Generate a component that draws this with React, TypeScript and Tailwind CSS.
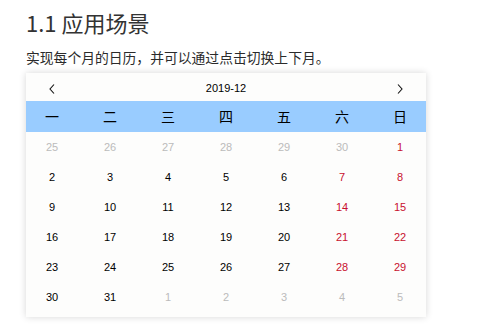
import { useState } from 'react'

const WEEK = ['一', '二', '三', '四', '五', '六', '日']

type Cell = { day: number; kind: 'prev' | 'cur' | 'next' }

function buildMonth(year: number, month: number): Cell[] {
  // month is 1-based, weeks start on Monday
  const first = new Date(year, month - 1, 1)
  const lead = (first.getDay() + 6) % 7
  const days = new Date(year, month, 0).getDate()
  const prevDays = new Date(year, month - 1, 0).getDate()
  const cells: Cell[] = []
  for (let i = lead; i > 0; i--) cells.push({ day: prevDays - i + 1, kind: 'prev' })
  for (let d = 1; d <= days; d++) cells.push({ day: d, kind: 'cur' })
  let n = 1
  while (cells.length < 42) cells.push({ day: n++, kind: 'next' })
  return cells
}

function Chevron({ dir }: { dir: 'left' | 'right' }) {
  return (
    <svg width="6" height="10" viewBox="0 0 6 10" fill="none" stroke="#111" strokeWidth="1.1">
      {dir === 'left' ? <polyline points="5,0.5 1,5 5,9.5" /> : <polyline points="1,0.5 5,5 1,9.5" />}
    </svg>
  )
}

export default function App() {
  const [ym, setYm] = useState({ y: 2019, m: 12 })
  const cells = buildMonth(ym.y, ym.m)

  function shift(step: number) {
    setYm(prev => {
      let m = prev.m + step
      let y = prev.y
      if (m < 1) { m = 12; y-- }
      if (m > 12) { m = 1; y++ }
      return { y, m }
    })
  }

  const cellFont = { fontFamily: '"Liberation Sans", Arial, sans-serif' }

  return (
    <div className="min-h-screen bg-white pl-[26px] pt-[7px]" style={{ fontFamily: '"Noto Sans CJK SC", "Noto Sans", sans-serif' }}>
      <h2 className="text-[22px] leading-[30px] font-normal text-[#333]">1.1 应用场景</h2>
      <p className="mt-[10px] text-[13.8px] leading-[20px] text-[#2b2b2b]">实现每个月的日历，并可以通过点击切换上下月。</p>

      <div className="mt-[6px] w-[400px] bg-[#fdfdfc] pb-[5px] shadow-[0_0_7px_rgba(0,0,0,0.16)]">
        <div className="ml-[-3px] grid h-[28px] grid-cols-[repeat(7,58px)] items-center pt-[3px]">
          <button onClick={() => shift(-1)} className="flex justify-center">
            <Chevron dir="left" />
          </button>
          <div className="col-span-5 text-center text-[11px] text-black" style={cellFont}>
            {ym.y}-{String(ym.m).padStart(2, '0')}
          </div>
          <button onClick={() => shift(1)} className="flex justify-center">
            <Chevron dir="right" />
          </button>
        </div>

        <div className="bg-[#99ccff]">
          <div className="ml-[-3px] grid h-[31px] grid-cols-[repeat(7,58px)] items-center">
            {WEEK.map(w => (
              <div key={w} className="text-center text-[14px] text-black">{w}</div>
            ))}
          </div>
        </div>

        <div className="ml-[-3px] grid grid-cols-[repeat(7,58px)] auto-rows-[30px] items-center text-[11px]" style={cellFont}>
          {cells.map((c, i) => {
            const weekend = i % 7 >= 5
            const color = c.kind !== 'cur' ? 'text-[#bbbbbb]' : weekend ? 'text-[#c8102e]' : 'text-black'
            return (
              <div key={i} className={`text-center ${color}`}>{c.day}</div>
            )
          })}
        </div>
      </div>
    </div>
  )
}
